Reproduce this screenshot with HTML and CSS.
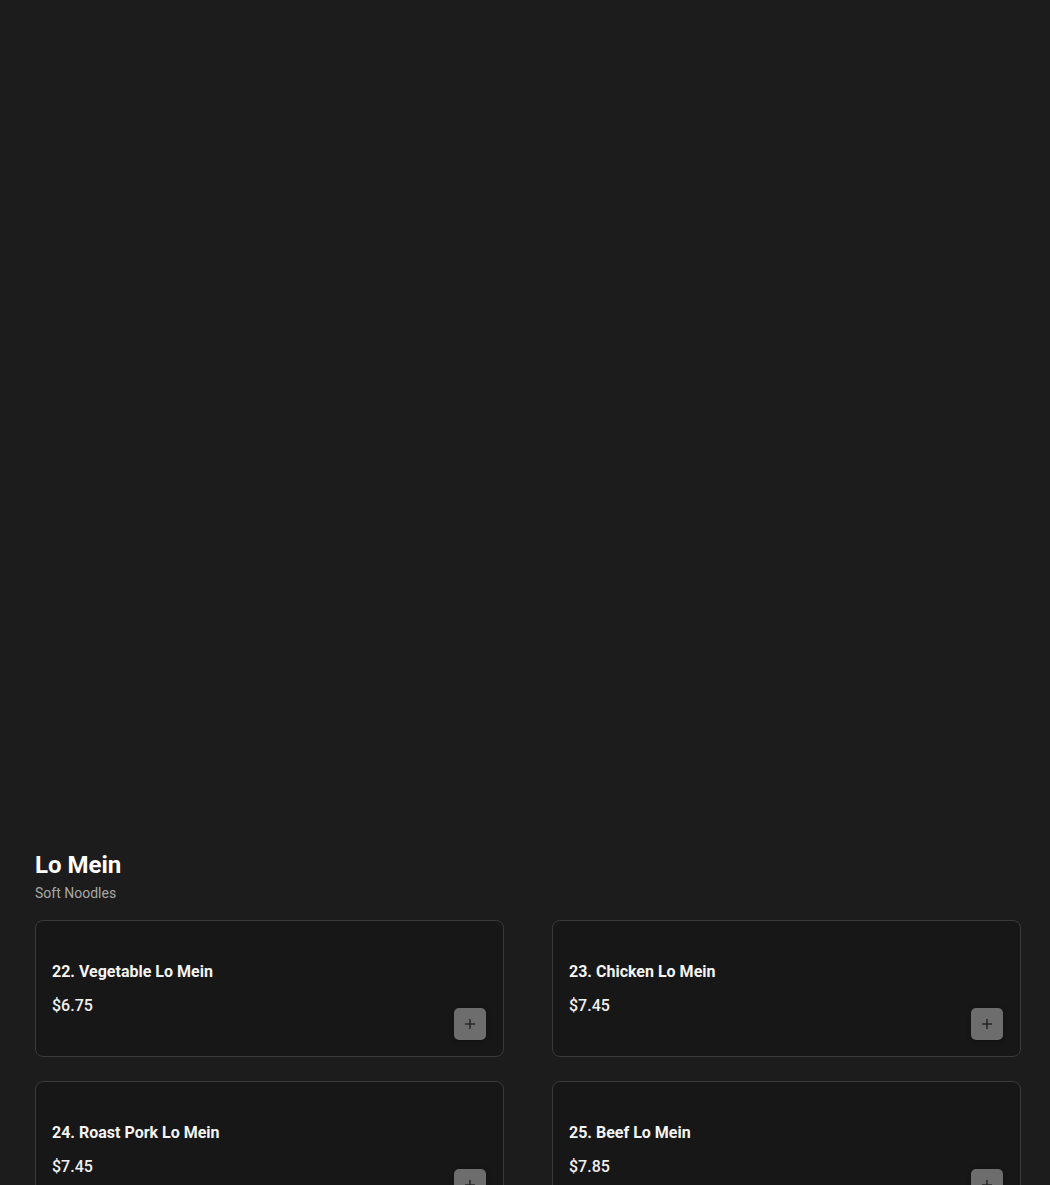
FILE: index.html
```html
<!DOCTYPE html>
<html>
<head>
    <title>Lo Mein</title>
    <link rel="stylesheet" href="styles.css">
</head>
<body>
    <div class="hero"></div>

    <div class="menu-section">
        <div class="section-header">
            <h2>Lo Mein</h2>
            <p>Soft Noodles</p>
        </div>

        <div class="item-grid">
            <div class="item-card">
                <div class="item-info">
                    <div class="item-name">22. Vegetable Lo Mein</div>
                    <div class="item-price">$6.75</div>
                </div>
                <button class="add-button" aria-label="Add">
                    <svg width="12" height="12" viewBox="0 0 12 12"><path d="M6 1v10M1 6h10" stroke="currentColor" stroke-width="1.5"/></svg>
                </button>
            </div>
            <div class="item-card">
                <div class="item-info">
                    <div class="item-name">23. Chicken Lo Mein</div>
                    <div class="item-price">$7.45</div>
                </div>
                <button class="add-button" aria-label="Add">
                    <svg width="12" height="12" viewBox="0 0 12 12"><path d="M6 1v10M1 6h10" stroke="currentColor" stroke-width="1.5"/></svg>
                </button>
            </div>
            <div class="item-card">
                <div class="item-info">
                    <div class="item-name">24. Roast Pork Lo Mein</div>
                    <div class="item-price">$7.45</div>
                </div>
                <button class="add-button" aria-label="Add">
                    <svg width="12" height="12" viewBox="0 0 12 12"><path d="M6 1v10M1 6h10" stroke="currentColor" stroke-width="1.5"/></svg>
                </button>
            </div>
            <div class="item-card">
                <div class="item-info">
                    <div class="item-name">25. Beef Lo Mein</div>
                    <div class="item-price">$7.85</div>
                </div>
                <button class="add-button" aria-label="Add">
                    <svg width="12" height="12" viewBox="0 0 12 12"><path d="M6 1v10M1 6h10" stroke="currentColor" stroke-width="1.5"/></svg>
                </button>
            </div>
        </div>
    </div>
</body>
</html>
```

FILE: styles.css
```css
body {
    font-family: Roboto, "Liberation Sans", Arial, sans-serif;
    margin: 0;
    background-color: #1c1c1c;
    color: #f2f2f2;
}
.hero {
    height: 849px;
}
.menu-section {
    padding: 0 29px 40px 35px;
}
.section-header h2 {
    margin: 0;
    font-size: 24px;
    line-height: 32px;
    font-weight: 700;
    color: #ffffff;
}
.section-header p {
    margin: 3px 0 0;
    font-size: 14px;
    line-height: 18px;
    color: #a8a8a8;
}
.item-grid {
    display: grid;
    grid-template-columns: 1fr 1fr;
    column-gap: 48px;
    row-gap: 24px;
    margin-top: 18px;
}
.item-card {
    display: flex;
    justify-content: space-between;
    align-items: flex-end;
    box-sizing: border-box;
    min-height: 137px;
    padding: 16px 17px 16px 16px;
    background-color: #171717;
    border: 1px solid #3a3a3a;
    border-radius: 8px;
}
.item-info {
    align-self: flex-start;
    padding-top: 24px;
}
.item-name {
    font-size: 16px;
    line-height: 22px;
    font-weight: 700;
    color: #f4f4f4;
}
.item-price {
    margin-top: 12px;
    font-size: 16px;
    line-height: 22px;
    font-weight: 500;
    color: #f0f0f0;
}
.add-button {
    display: flex;
    align-items: center;
    justify-content: center;
    width: 32px;
    height: 32px;
    padding: 0;
    border: none;
    border-radius: 5px;
    background-color: #6d6d6d;
    color: #262626;
    box-shadow: 0 1px 4px rgba(0, 0, 0, 0.35);
    cursor: pointer;
}
```
